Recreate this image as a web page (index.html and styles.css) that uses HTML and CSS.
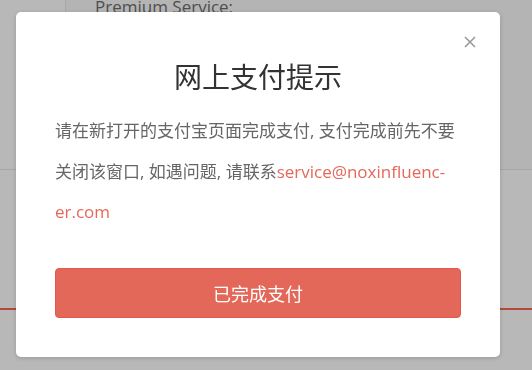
FILE: index.html
```html
<!DOCTYPE html>
<html lang="zh-CN">
<head>
<meta charset="utf-8">
<link rel="stylesheet" href="styles.css">
</head>
<body>
<div class="page">
  <div class="row-top">
    <aside class="side"></aside>
    <div class="content"><p class="prem">Premium Service:</p></div>
  </div>
  <div class="row-mid"></div>
  <div class="row-red"></div>
  <div class="row-bot"></div>
</div>
<div class="overlay">
  <div class="modal">
    <button class="close" aria-label="close">
      <svg width="12" height="12" viewBox="0 0 12 12"><path d="M1 1L11 11M11 1L1 11" stroke="#9a9a9a" stroke-width="1.6" fill="none"/></svg>
    </button>
    <h2 class="title">网上支付提示</h2>
    <p class="msg">请在新打开的支付宝页面完成支付, 支付完成前先不要关闭该窗口, 如遇问题, 请联系<a class="mail">service@noxinfluenc-<br>er.com</a></p>
    <button class="done">已完成支付</button>
  </div>
</div>
</body>
</html>
```
FILE: styles.css
```css
html, body {
  margin: 0;
  padding: 0;
  width: 532px;
  height: 370px;
  overflow: hidden;
  background: #b8b8b8;
  font-family: "Open Sans", "Noto Sans CJK SC", sans-serif;
}
.page {
  display: flex;
  flex-direction: column;
  height: 370px;
}
.row-top {
  display: flex;
  height: 169px;
  border-bottom: 1px solid #a6a6a6;
  background: #b4b4b4;
}
.side {
  width: 65px;
  border-right: 1px solid #a9a9a9;
  background: #b8b8b8;
}
.content {
  flex: 1;
}
.prem {
  margin: -5px 0 0 29px;
  font-size: 17px;
  color: #4e4e4e;
  font-family: "Open Sans", sans-serif;
}
.row-mid {
  height: 138px;
}
.row-red {
  height: 2px;
  background: #b24a3c;
}
.overlay {
  position: fixed;
  inset: 0;
}
.modal {
  position: absolute;
  left: 16px;
  top: 12px;
  width: 484px;
  height: 345px;
  box-sizing: border-box;
  background: #fff;
  border-radius: 5px;
  box-shadow: 0 1px 4px rgba(0,0,0,0.18);
  padding: 0 39px;
  display: flex;
  flex-direction: column;
}
.close {
  position: absolute;
  right: 24px;
  top: 24px;
  border: 0;
  background: none;
  padding: 0;
  width: 12px;
  height: 12px;
  display: flex;
}
.title {
  margin: 45px 0 0;
  text-align: center;
  font-family: "Noto Sans CJK SC", sans-serif;
  font-weight: 400;
  font-size: 28px;
  line-height: 38px;
  color: #333;
}
.msg {
  margin: 16px 0 0;
  font-family: "Open Sans", "Noto Sans CJK SC", sans-serif;
  font-size: 17px;
  line-height: 40.5px;
  color: #666;
}
.mail {
  color: #e5685a;
}
.done {
  margin-top: 35px;
  height: 50px;
  width: 406px;
  border: 1px solid #e15a49;
  border-radius: 4px;
  background: #e4685a;
  color: #fff;
  font-family: "Noto Sans CJK SC", sans-serif;
  font-size: 18px;
}
```
